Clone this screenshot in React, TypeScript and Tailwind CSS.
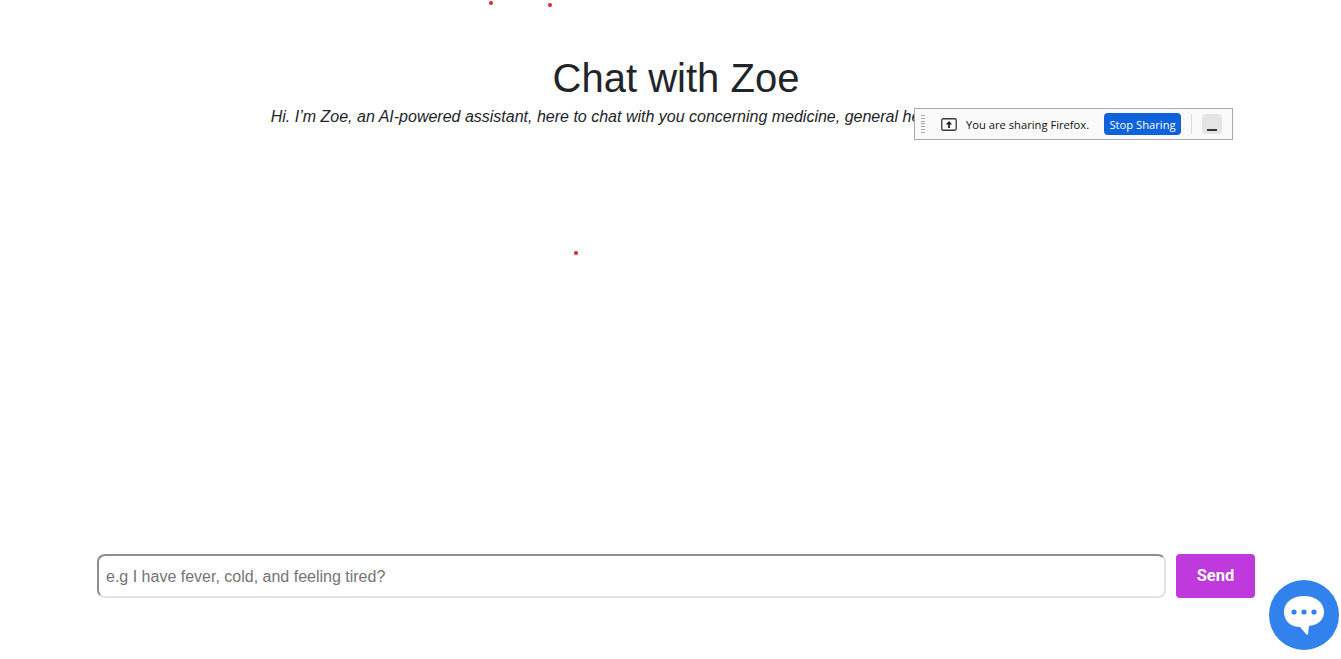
export default function App() {
  return (
    <div className="relative h-[659px] overflow-hidden bg-white font-['Liberation_Sans',sans-serif] text-[#212529]">
      <div className="flex h-full flex-col pl-[97px] pr-[86px] pt-[54px]">
        <h1 className="text-center text-[40px] leading-[48px]">Chat with Zoe</h1>
        <p className="mt-[3px] text-center text-base italic leading-6">
          Hi. I’m Zoe, an AI-powered assistant, here to chat with you concerning medicine, general health, and wellness tips.
        </p>

        <div className="mt-[425px] flex gap-[10px]">
          <input
            readOnly
            placeholder="e.g I have fever, cold, and feeling tired?"
            className="h-[44px] flex-1 rounded-[8px] border-2 border-t-[#8f8f8f] border-l-[#8f8f8f] border-r-[#e2e2e2] border-b-[#e2e2e2] bg-white px-[7px] pt-[2px] text-base outline-none placeholder:text-[#757575]"
          />
          <button className="h-[44px] w-[79px] rounded-[4px] bg-[#bf39dc] pt-[1px] font-['Roboto',sans-serif] text-[16.5px] font-bold text-white">
            Send
          </button>
        </div>
      </div>

      {/* Zoom share bar */}
      <div className="absolute left-[914px] top-[108px] flex h-[32px] w-[319px] items-center border border-[#a9a9a9] bg-[#fafafa] font-['Open_Sans',sans-serif] text-[11.2px] text-[#111]">
        <div className="ml-[6px] flex h-[18px] w-[4px] flex-col justify-between">
          {[0, 1, 2, 3, 4, 5, 6].map((i) => (
            <div key={i} className="h-px bg-[#a8a8a8]" />
          ))}
        </div>
        <svg width="16" height="13" viewBox="0 0 16 13" className="ml-[16px]" fill="none">
          <rect x="0.75" y="0.75" width="14.5" height="11.5" rx="1.5" stroke="#3a3a3a" strokeWidth="1.3" />
          <path d="M8 3 L4.8 6.4 H7.1 V10 H8.9 V6.4 H11.2 Z" fill="#222" />
        </svg>
        <span className="ml-[9px] w-[123px] whitespace-nowrap pt-[2px]">You are sharing Firefox.</span>
        <button className="ml-[15px] h-[22px] w-[77px] rounded-[4px] bg-[#0e62dc] pt-[1px] text-center text-[11.2px] leading-[21px] text-white">
          Stop Sharing
        </button>
        <div className="ml-[10px] h-[20px] w-px bg-[#dcdcdc]" />
        <div className="ml-[10px] flex h-[20px] w-[20px] items-end justify-center rounded-[4px] bg-[#e4e4e4] pb-[3px]">
          <div className="h-[2px] w-[10px] bg-[#333]" />
        </div>
      </div>

      {/* Chat widget */}
      <div className="absolute left-[1269px] top-[580px] flex h-[70px] w-[70px] items-center justify-center rounded-full bg-[#3182ec]">
        <svg width="42" height="42" viewBox="0 0 42 42">
          <path
            d="M21 2 C32 2 41 8 41 18 C41 27 34 31 26 32 L25 40 Q24.5 41.5 23 40 L17 33 C8 33 1 27 1 18 C1 8 10 2 21 2 Z"
            fill="#fff"
          />
          <circle cx="11" cy="18" r="2.6" fill="#3182ec" />
          <circle cx="21" cy="18" r="2.6" fill="#3182ec" />
          <circle cx="31" cy="18" r="2.6" fill="#3182ec" />
        </svg>
      </div>

      {/* Red cursor specks */}
      <div className="absolute left-[489px] top-[1px] h-[4px] w-[4px] rounded-full bg-[#ee1c25]" />
      <div className="absolute left-[548px] top-[3px] h-[4px] w-[4px] rounded-full bg-[#ee1c25]" />
      <div className="absolute left-[574px] top-[251px] h-[4px] w-[4px] rounded-full bg-[#ee1c25]" />
    </div>
  );
}
